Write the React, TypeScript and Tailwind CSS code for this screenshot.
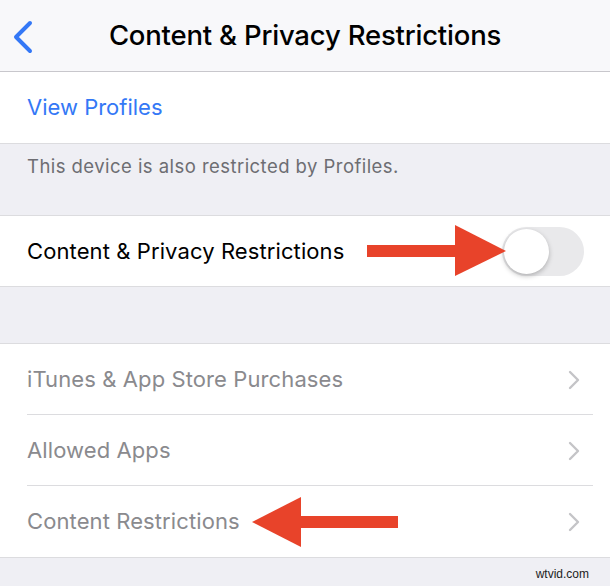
import React from "react";

const font = { fontFamily: 'Inter, "Noto Sans", "Liberation Sans", sans-serif' };

function Chevron() {
  return (
    <svg width="12" height="20" viewBox="0 0 12 20" fill="none">
      <path d="M2 2l8 8-8 8" stroke="#c4c4c7" strokeWidth="2.4" strokeLinecap="round" strokeLinejoin="round" />
    </svg>
  );
}

function Row({ label, last }: { label: string; last?: boolean }) {
  return (
    <div className="relative flex h-[71px] items-center justify-between pl-[27px] pr-[30px]">
      <span className="text-[22px] tracking-[0.1px] text-[#8a8a8e]">{label}</span>
      <Chevron />
      {!last && <div className="absolute bottom-0 left-[27px] right-[17px] h-px bg-[#dcdcdf]" />}
    </div>
  );
}

export default function App() {
  return (
    <div className="relative h-[586px] w-[610px] overflow-hidden bg-[#efeff4]" style={font}>
      {/* navigation bar */}
      <div className="relative flex h-[72px] items-center justify-center border-b border-[#c8c7cc] bg-[#f8f8fa]">
        <svg className="absolute left-[12px] top-[20px]" width="22" height="34" viewBox="0 0 22 34" fill="none">
          <path d="M18 3L4 17l14 14" stroke="#3478f6" strokeWidth="4" strokeLinecap="round" strokeLinejoin="round" />
        </svg>
        <h1 className="text-[27.5px] font-medium tracking-[-0.2px] text-black">Content &amp; Privacy Restrictions</h1>
      </div>

      {/* profiles link */}
      <div className="flex h-[71px] items-center bg-white pl-[27px]">
        <span className="text-[22px] text-[#3478f6]">View Profiles</span>
      </div>
      <div className="h-[72px] border-t border-[#dcdcdf] pl-[27px] pt-[9px]">
        <span className="text-[18.5px] tracking-[0.45px] text-[#6d6d72]">This device is also restricted by Profiles.</span>
      </div>

      {/* master switch */}
      <div className="flex h-[72px] items-center justify-between border-y border-[#dcdcdf] bg-white pl-[27px] pr-[26px]">
        <span className="text-[22px] tracking-[0.1px] text-black">Content &amp; Privacy Restrictions</span>
        <div className="relative h-[49px] w-[82px] rounded-full bg-[#e9e9eb]">
          <div className="absolute left-[2px] top-[2px] h-[45px] w-[45px] rounded-full bg-white shadow-[0_2px_5px_rgba(0,0,0,0.25)]" />
        </div>
      </div>

      <div className="h-[56px]" />

      {/* restriction categories */}
      <div className="border-y border-[#dcdcdf] bg-white">
        <Row label="iTunes & App Store Purchases" />
        <Row label="Allowed Apps" />
        <Row label="Content Restrictions" last />
      </div>

      <div className="absolute bottom-[3px] right-[21px] text-[12px] text-[#222]" style={{ fontFamily: '"Liberation Sans", Arial, sans-serif' }}>
        wtvid.com
      </div>

      {/* callout arrows */}
      <svg className="pointer-events-none absolute left-0 top-0" width="610" height="586" viewBox="0 0 610 586">
        <rect x="367" y="245" width="92" height="12" fill="#e8432a" />
        <polygon points="455,225 506,251 455,276" fill="#e8432a" />
        <rect x="296" y="516" width="102" height="12" fill="#e8432a" />
        <polygon points="301,497 252,522 301,547" fill="#e8432a" />
      </svg>
    </div>
  );
}
